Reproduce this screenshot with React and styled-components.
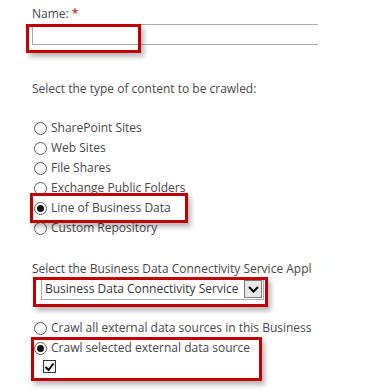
import React from "react";
import styled, { createGlobalStyle } from "styled-components";

const Global = createGlobalStyle`
  html, body { margin: 0; padding: 0; background: #fff; }
  body { font-family: "Open Sans", "Liberation Sans", sans-serif; }
`;

const Page = styled.div`
  width: 392px;
  height: 390px;
  overflow: hidden;
  padding: 6px 0 0 32px;
  box-sizing: border-box;
  color: #474747;
  font-size: 12px;
  line-height: 16px;
`;

const Label = styled.div`
  margin: 0;
`;

const Star = styled.span`
  color: #bf0000;
`;

const Highlight = styled.div`
  position: relative;
  &::after {
    content: "";
    position: absolute;
    left: ${(p) => p.$l}px;
    top: ${(p) => p.$t}px;
    width: ${(p) => p.$w}px;
    height: ${(p) => p.$h}px;
    border: 3px solid #c00000;
    box-sizing: border-box;
    box-shadow: 3px 4px 5px rgba(0, 0, 0, 0.28);
    pointer-events: none;
  }
`;

const TextInput = styled.div`
  margin-top: 2px;
  width: 286px;
  height: 21px;
  border: 1px solid #ababab;
  border-right: none;
  box-sizing: border-box;
`;

const Para = styled.div`
  margin-top: ${(p) => p.$mt}px;
  white-space: nowrap;
`;

const RadioList = styled.div`
  display: flex;
  flex-direction: column;
  margin-top: ${(p) => p.$mt}px;
`;

const Row = styled.div`
  display: flex;
  align-items: center;
  height: 20px;
  gap: 4px;
  padding-left: 2px;
  white-space: nowrap;
`;

const Circle = styled.span`
  width: 13px;
  height: 13px;
  border-radius: 50%;
  border: 1px solid #5a5a5a;
  box-sizing: border-box;
  background: #fff;
  display: flex;
  align-items: center;
  justify-content: center;
  flex: none;
  &::after {
    content: "";
    display: ${(p) => (p.$on ? "block" : "none")};
    width: 7px;
    height: 7px;
    border-radius: 50%;
    background: #111;
  }
`;

const SelectBox = styled.div`
  margin: 1px 0 0 9px;
  width: 223px;
  height: 22px;
  border: 1px solid #ababab;
  box-sizing: border-box;
  display: flex;
  align-items: center;
  color: #333;
  font-size: 12px;
  padding-right: 1px;
`;

const SelectText = styled.span`
  flex: 1;
  padding-left: 3px;
  white-space: nowrap;
`;

const Arrow = styled.span`
  width: 18px;
  height: 18px;
  border: 1px solid #7a7a7a;
  box-sizing: border-box;
  background: #e6e6e6;
  display: flex;
  align-items: center;
  justify-content: center;
  flex: none;
`;

const CheckRow = styled.div`
  height: 17px;
  padding-left: 11px;
  display: flex;
  align-items: center;
`;

const Check = styled.span`
  width: 13px;
  height: 13px;
  border: 1px solid #333;
  box-sizing: border-box;
  display: flex;
  align-items: center;
  justify-content: center;
`;

function Radio({ on, children }) {
  return (
    <Row>
      <Circle $on={on} />
      <span>{children}</span>
    </Row>
  );
}

export default function App() {
  return (
    <>
      <Global />
      <Page>
        <Label>
          Name: <Star>*</Star>
        </Label>
        <Highlight $l={-6} $t={0} $w={115} $h={29}>
          <TextInput />
        </Highlight>
        <Para $mt={36}>Select the type of content to be crawled:</Para>
        <RadioList $mt={21}>
          <Radio>SharePoint Sites</Radio>
          <Radio>Web Sites</Radio>
          <Radio>File Shares</Radio>
          <Radio>Exchange Public Folders</Radio>
          <Highlight $l={-2} $t={-5} $w={158} $h={30}>
            <Radio on>Line of Business Data</Radio>
          </Highlight>
          <Radio>Custom Repository</Radio>
        </RadioList>
        <Para $mt={23}>Select the Business Data Connectivity Service Appl</Para>
        <Highlight $l={1} $t={-1} $w={235} $h={30}>
          <SelectBox>
            <SelectText>Business Data Connectivity Service</SelectText>
            <Arrow>
              <svg width="11" height="7" viewBox="0 0 11 7">
                <path d="M1 1 L5.5 5.5 L10 1" fill="none" stroke="#000" strokeWidth="2" />
              </svg>
            </Arrow>
          </SelectBox>
        </Highlight>
        <RadioList $mt={18}>
          <Radio>Crawl all external data sources in this Business</Radio>
          <Highlight $l={-1} $t={-1} $w={231} $h={44}>
            <Radio on>Crawl selected external data source</Radio>
            <CheckRow>
              <Check>
                <svg width="11" height="10" viewBox="0 0 11 10">
                  <path d="M1.5 5 L4.5 8 L9.5 1.5" fill="none" stroke="#000" strokeWidth="2" />
                </svg>
              </Check>
            </CheckRow>
          </Highlight>
        </RadioList>
      </Page>
    </>
  );
}
